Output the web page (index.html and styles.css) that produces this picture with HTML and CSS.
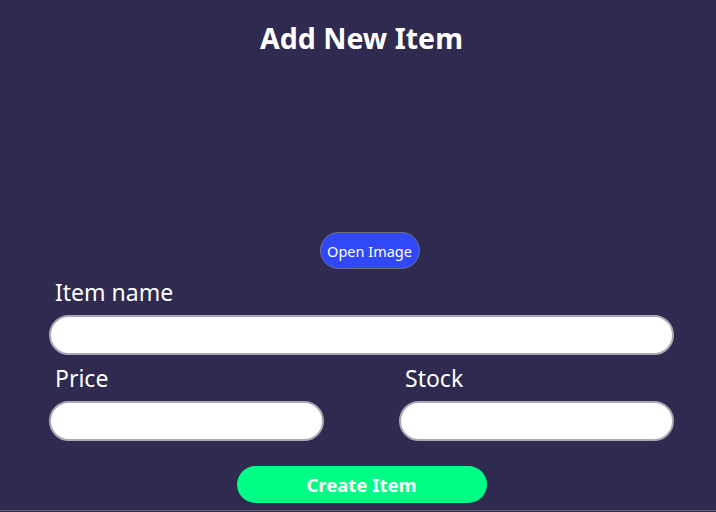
FILE: index.html
```html
<!DOCTYPE html>
<html>
<head>
<meta charset="utf-8">
<link rel="stylesheet" href="styles.css">
</head>
<body>
<div class="page">
  <h1 class="title">Add New Item</h1>
  <div class="image-area"></div>
  <div class="open-row"><button class="open-btn">Open Image</button></div>
  <div class="field">
    <label class="label">Item name</label>
    <input class="input" type="text">
  </div>
  <div class="row">
    <div class="field">
      <label class="label">Price</label>
      <input class="input" type="text">
    </div>
    <div class="field">
      <label class="label">Stock</label>
      <input class="input" type="text">
    </div>
  </div>
  <div class="create-row"><button class="create-btn">Create Item</button></div>
</div>
</body>
</html>
```

FILE: styles.css
```css
html, body {
  margin: 0;
  padding: 0;
  background: #2e2a50;
  height: 100%;
  overflow: hidden;
}
.page {
  font-family: "Noto Sans", "Open Sans", sans-serif;
  color: #fff;
  padding: 0 42px 0 49px;
  height: 511px;
  box-sizing: border-box;
  border-bottom: 1px solid #6b6a7a;
}
.title {
  margin: 0;
  padding-top: 18px;
  text-align: center;
  font-size: 28.5px;
  font-weight: 700;
  line-height: 40px;
}
.image-area {
  height: 174px;
}
.open-row {
  display: flex;
  justify-content: center;
  padding-left: 16px;
}
.open-btn {
  width: 100px;
  height: 37px;
  border-radius: 19px;
  border: 1px solid #6e6e8a;
  background: #3048f6;
  color: #fff;
  font-family: "Noto Sans", sans-serif;
  font-size: 14.5px;
  padding: 0;
}
.field {
  display: flex;
  flex-direction: column;
}
.label {
  font-size: 23px;
  line-height: 30px;
  padding-left: 6px;
  margin-top: 8px;
  margin-bottom: 8px;
}
.input {
  height: 40px;
  box-sizing: border-box;
  border: 2px solid #a9a9b5;
  border-radius: 20px;
  background: #fff;
  margin: 0;
  padding: 0 14px;
}
.row {
  display: grid;
  grid-template-columns: 275px 275px;
  column-gap: 75px;
}
.create-row {
  display: flex;
  justify-content: center;
  margin-top: 25px;
}
.create-btn {
  width: 250px;
  height: 37px;
  border: none;
  border-radius: 19px;
  background: #00fe87;
  color: #fff;
  font-family: "Noto Sans", sans-serif;
  font-size: 18.5px;
  font-weight: 700;
  padding: 0;
}
```
